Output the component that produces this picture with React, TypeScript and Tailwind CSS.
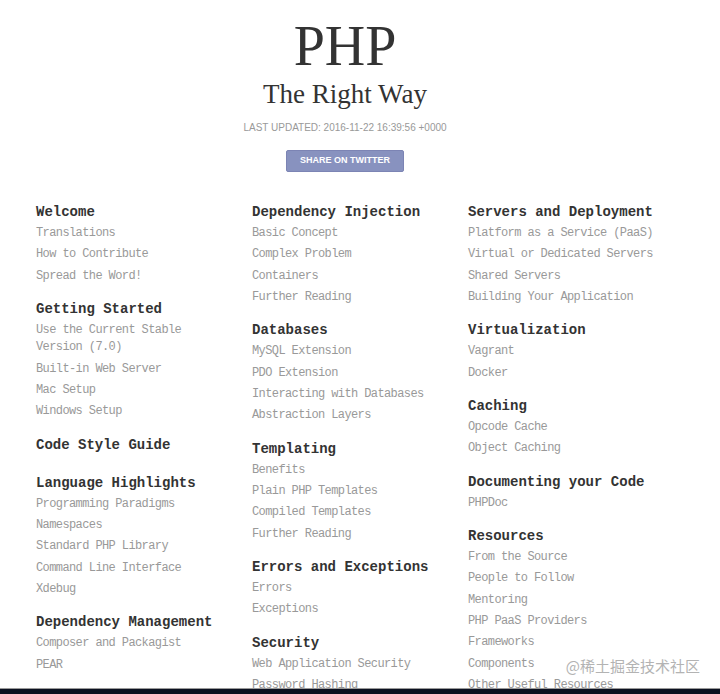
import React from "react";

type Section = { title: string; links: string[] };

const col1: Section[] = [
  { title: "Welcome", links: ["Translations", "How to Contribute", "Spread the Word!"] },
  {
    title: "Getting Started",
    links: ["Use the Current Stable Version (7.0)", "Built-in Web Server", "Mac Setup", "Windows Setup"],
  },
  { title: "Code Style Guide", links: [] },
  {
    title: "Language Highlights",
    links: ["Programming Paradigms", "Namespaces", "Standard PHP Library", "Command Line Interface", "Xdebug"],
  },
  { title: "Dependency Management", links: ["Composer and Packagist", "PEAR"] },
];

const col2: Section[] = [
  { title: "Dependency Injection", links: ["Basic Concept", "Complex Problem", "Containers", "Further Reading"] },
  {
    title: "Databases",
    links: ["MySQL Extension", "PDO Extension", "Interacting with Databases", "Abstraction Layers"],
  },
  {
    title: "Templating",
    links: ["Benefits", "Plain PHP Templates", "Compiled Templates", "Further Reading"],
  },
  { title: "Errors and Exceptions", links: ["Errors", "Exceptions"] },
  { title: "Security", links: ["Web Application Security", "Password Hashing", "Data Filtering"] },
];

const col3: Section[] = [
  {
    title: "Servers and Deployment",
    links: ["Platform as a Service (PaaS)", "Virtual or Dedicated Servers", "Shared Servers", "Building Your Application"],
  },
  { title: "Virtualization", links: ["Vagrant", "Docker"] },
  { title: "Caching", links: ["Opcode Cache", "Object Caching"] },
  { title: "Documenting your Code", links: ["PHPDoc"] },
  {
    title: "Resources",
    links: [
      "From the Source",
      "People to Follow",
      "Mentoring",
      "PHP PaaS Providers",
      "Frameworks",
      "Components",
      "Other Useful Resources",
    ],
  },
];

function Column({ sections }: { sections: Section[] }) {
  return (
    <div className="flex flex-col">
      {sections.map((s) => (
        <div key={s.title} className={s.links.length ? "mb-[11px]" : "mb-[16px]"}>
          <h2 className="text-[14px] leading-[22px] font-bold text-[#333333]">{s.title}</h2>
          {s.links.length > 0 && (
            <ul className="w-[190px]">
              {s.links.map((l) => (
                <li key={l} className="text-[12px] leading-[17.33px] py-[2px] tracking-[-0.6px] text-[#999999]">
                  <a href="#">{l}</a>
                </li>
              ))}
            </ul>
          )}
        </div>
      ))}
    </div>
  );
}

export default function App() {
  return (
    <div className="relative h-[694px] w-[720px] bg-white flex flex-col overflow-hidden">
      <div className="flex-1 overflow-hidden">
        <header className="flex flex-col items-center pr-[30px] pt-[16px]">
          <h1
            className="text-[56px] leading-[60px] text-[#333333]"
            style={{ fontFamily: '"Liberation Serif", serif' }}
          >
            PHP
          </h1>
          <div
            className="text-[27px] leading-[32px] mt-[2px] text-[#333333]"
            style={{ fontFamily: '"Liberation Serif", serif' }}
          >
            The Right Way
          </div>
          <div
            className="mt-[12px] text-[10px] leading-[12px] text-[#999999]"
            style={{ fontFamily: '"Liberation Sans", Arial, sans-serif' }}
          >
            LAST UPDATED: 2016-11-22 16:39:56 +0000
          </div>
          <a
            href="#"
            className="mt-[16px] flex h-[22px] w-[118px] items-center justify-center rounded-[2px] border border-[#7c84b4] bg-[#8892bf] text-[9px] font-semibold text-white"
            style={{ fontFamily: '"Liberation Sans", Arial, sans-serif' }}
          >
            SHARE ON TWITTER
          </a>
        </header>
        <nav
          className="mt-[29px] grid grid-cols-3 px-[36px]"
          style={{ fontFamily: '"Liberation Mono", "Courier New", monospace' }}
        >
          <Column sections={col1} />
          <Column sections={col2} />
          <Column sections={col3} />
        </nav>
      </div>
      <div className="h-[1px] bg-[#9a9a9a]" />
      <div className="h-[5px] bg-[#0b1020]" />
      <div
        className="absolute right-[20px] bottom-[19px] text-[15px] leading-[18px] text-[#b3b3b3]"
        style={{ fontFamily: '"Noto Sans CJK SC", sans-serif' }}
      >
        @稀土掘金技术社区
      </div>
    </div>
  );
}
